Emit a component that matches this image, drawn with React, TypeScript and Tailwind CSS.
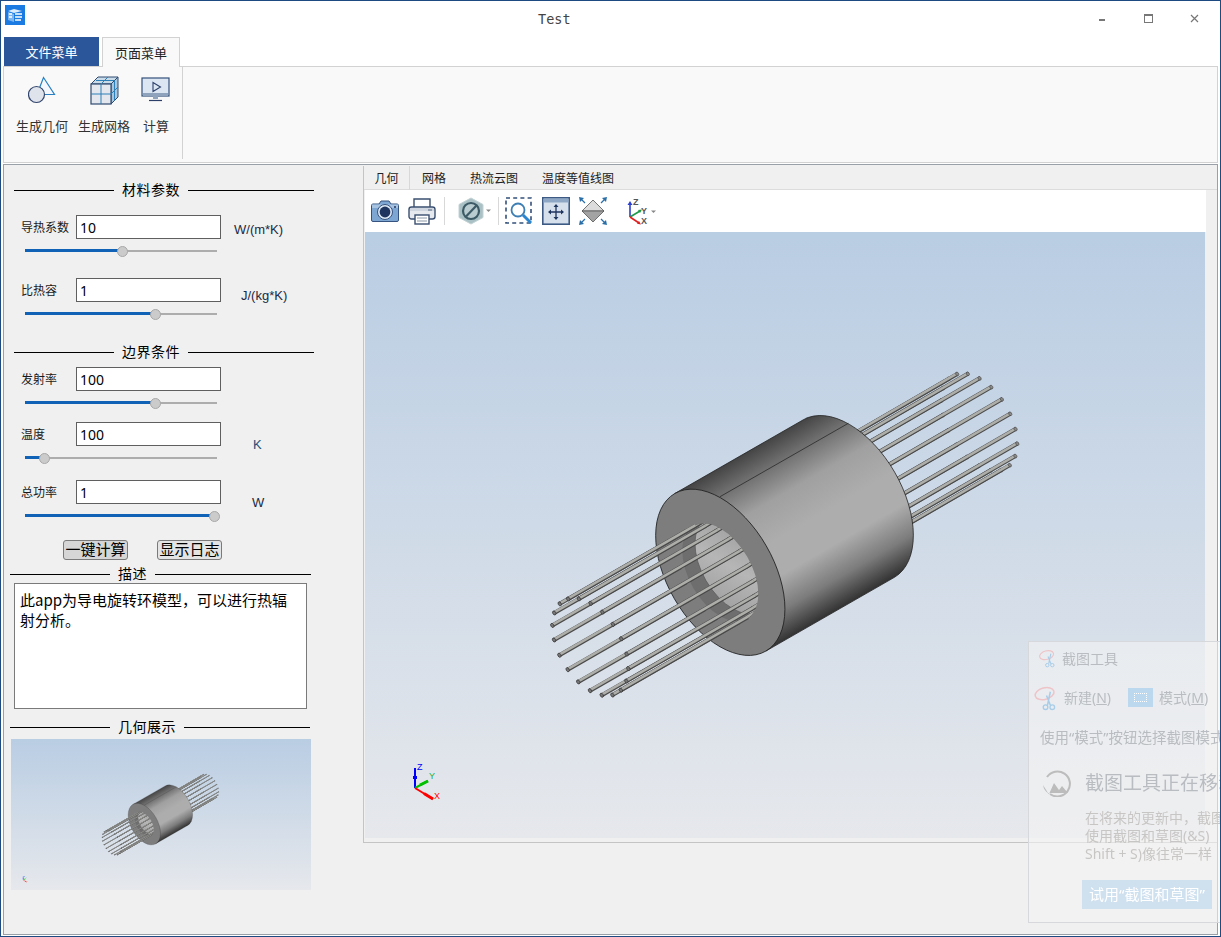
import { FC } from "react";

interface FieldProps {
  label: string;
  value: string;
  unit?: string;
  unitClass?: string;
  handleX: number;
  className?: string;
}

const SLIDER_WIDTH = 192;

// rods of the model, front end on a tilted ellipse
const rods = Array.from({ length: 20 }, (_, i) => {
  const th = ((i * 18 + 9) * Math.PI) / 180;
  const ox = 53.3 * Math.cos(th) * 0.5 + 31.3 * Math.sin(th) * 0.866;
  const oy = 53.3 * Math.cos(th) * 0.866 - 31.3 * Math.sin(th) * 0.5;
  return { x: 590.3 + ox, y: 647 + oy, depth: Math.sin(th) };
}).sort((a, b) => a.depth - b.depth);

const RodLine: FC<{ x1: number; y1: number; x2: number; y2: number }> = ({ x1, y1, x2, y2 }) => (
  <>
    <line x1={x1} y1={y1} x2={x2} y2={y2} stroke="#4a4a4a" strokeWidth="4" />
    <line x1={x1} y1={y1 - 0.5} x2={x2} y2={y2 - 0.5} stroke="#adada9" strokeWidth="2.6" />
  </>
);

const Triad: FC<{ x: number; y: number; scale?: number }> = ({ x, y, scale = 1 }) => (
  <g transform={`translate(${x} ${y}) scale(${scale})`}>
    <line x1="0" y1="0" x2="0" y2="-20" stroke="#0000ff" strokeWidth="2" />
    <line x1="0" y1="-12" x2="0" y2="-9" stroke="#0000ff" strokeWidth="4" />
    <line x1="0" y1="0" x2="13" y2="-7" stroke="#00c000" strokeWidth="2" />
    <line x1="5" y1="-3" x2="13" y2="-7" stroke="#00c000" strokeWidth="3" />
    <line x1="0" y1="0" x2="18" y2="11" stroke="#ff0000" strokeWidth="2" />
    <line x1="9" y1="5.5" x2="18" y2="11" stroke="#ff0000" strokeWidth="3" />
    <text x="2" y="-18" fontSize="9" fill="#0000ff" fontFamily="Liberation Sans">Z</text>
    <text x="14" y="-9" fontSize="9" fill="#20b040" fontFamily="Liberation Sans">Y</text>
    <text x="19" y="11" fontSize="9" fill="#ff0000" fontFamily="Liberation Sans">X</text>
  </g>
);

const Model: FC<{ id: string }> = ({ id }) => (
  <>
    <defs>
      <linearGradient id={`${id}-body`} gradientUnits="userSpaceOnUse" x1="674.8" y1="493.5" x2="765.8" y2="651.1">
        <stop offset="0" stopColor="#444444" />
        <stop offset="0.12" stopColor="#6c6c6c" />
        <stop offset="0.3" stopColor="#a0a0a0" />
        <stop offset="0.5" stopColor="#adadad" />
        <stop offset="0.68" stopColor="#adadad" />
        <stop offset="0.85" stopColor="#7c7c7c" />
        <stop offset="1" stopColor="#333333" />
      </linearGradient>
      <linearGradient id={`${id}-wall`} gradientUnits="userSpaceOnUse" x1="700" y1="530" x2="750" y2="615">
        <stop offset="0" stopColor="#9a9a9a" />
        <stop offset="0.5" stopColor="#b6b6b6" />
        <stop offset="1" stopColor="#9c9c9c" />
      </linearGradient>
      <clipPath id={`${id}-hole`}>
        <ellipse cx="720.3" cy="572.3" rx="53.5" ry="31.2" transform="rotate(60 720.3 572.3)" />
      </clipPath>
    </defs>

    {rods.map((r, i) => (
      <g key={i}>
        <RodLine x1={r.x + 200} y1={r.y - 115.5} x2={r.x + 389} y2={r.y - 225} />
        <ellipse cx={r.x + 389} cy={r.y - 225} rx="2" ry="1.4" transform={`rotate(60 ${r.x + 389} ${r.y - 225})`} fill="#8a8a8a" stroke="#444" strokeWidth="0.6" />
      </g>
    ))}

    <path
      d="M674.8 493.5 L803.8 419.5 A91 53 60 0 1 894.8 577.1 L765.8 651.1 Z"
      fill={`url(#${id}-body)`}
      stroke="#222"
      strokeWidth="0.8"
    />
    <line x1="720" y1="496.7" x2="848.3" y2="423.3" stroke="#2a2a2a" strokeWidth="0.8" />
    <ellipse cx="720.3" cy="572.3" rx="91" ry="53" transform="rotate(60 720.3 572.3)" fill="#7d7d7d" stroke="#222" strokeWidth="0.8" />
    <ellipse cx="720.3" cy="572.3" rx="53.5" ry="31.2" transform="rotate(60 720.3 572.3)" fill="#6e6e6e" />
    <g clipPath={`url(#${id}-hole)`}>
      <ellipse cx="733" cy="565" rx="53.5" ry="31.2" transform="rotate(60 733 565)" fill={`url(#${id}-wall)`} stroke="#555" strokeWidth="0.6" />
      {rods.map((r, i) => (
        <RodLine key={i} x1={r.x + 125} y1={r.y - 72} x2={r.x + 200} y2={r.y - 115.5} />
      ))}
    </g>
    {rods.map((r, i) => (
      <g key={i}>
        <RodLine x1={r.x} y1={r.y} x2={r.x + 127} y2={r.y - 73} />
        <ellipse cx={r.x} cy={r.y} rx="2.2" ry="1.5" transform={`rotate(60 ${r.x} ${r.y})`} fill="#777" stroke="#333" strokeWidth="0.7" />
      </g>
    ))}
  </>
);

const SectionTitle: FC<{ title: string; left: string; right: string; className?: string }> = ({
  title,
  left,
  right,
  className,
}) => (
  <div className={`flex h-[20px] items-center ${className}`}>
    <div className={`h-px bg-black ${left}`} />
    <span className="mx-2 -translate-y-px text-[14px] leading-5 tracking-[0.5px] text-black whitespace-nowrap">{title}</span>
    <div className={`h-px bg-black ${right}`} />
  </div>
);

const Slider: FC<{ handleX: number }> = ({ handleX }) => {
  const pos = handleX - 25;
  return (
    <div className="relative mt-[5px] ml-[21px] flex h-[14px] w-[192px] items-center">
      <div className="h-[2px] w-full bg-[#adadad]" />
      <div className="absolute left-0 top-[5px] h-[3px] bg-[#0f62b5]" style={{ width: (pos / SLIDER_WIDTH) * 100 + "%" }} />
      <div
        className="absolute top-[1.5px] h-[11px] w-[11px] rounded-full border border-[#a8a8a8] bg-[#cbcbcb]"
        style={{ left: pos - 5.5 }}
      />
    </div>
  );
};

const Field: FC<FieldProps> = ({ label, value, unit, unitClass, handleX, className }) => (
  <div className={className}>
    <div className="flex h-[24px] items-start">
      <span className="ml-[17px] h-[24px] w-[55px] text-[12px] leading-[24px] text-[#1a1a1a] whitespace-nowrap">{label}</span>
      <div className="h-[24px] w-[145px] border border-[#5f5f5f] bg-white pl-[3px] font-['Noto_Sans',sans-serif] text-[14px] leading-[23px] text-black">
        {value}
      </div>
      {unit && (
        <span className={`font-['Liberation_Sans',sans-serif] text-[13px] leading-4 text-[#1a2a44] whitespace-nowrap ${unitClass}`}>
          {unit}
        </span>
      )}
    </div>
    <Slider handleX={handleX} />
  </div>
);

const RibbonButton: FC<{ label: string; width: string; children: React.ReactNode }> = ({ label, width, children }) => (
  <div className={`flex flex-col items-center ${width}`}>
    <div className="flex h-[30px] items-center justify-center">{children}</div>
    <span className="mt-[12px] text-[13px] leading-[18px] text-[#333] whitespace-nowrap">{label}</span>
  </div>
);

const AppIcon = () => (
  <svg width="20" height="20" viewBox="0 0 20 20">
    <rect width="20" height="20" fill="#1b7be3" />
    <path d="M3 6 L9 4 L17 6 L9 8 Z" fill="#dcecfb" />
    <path d="M3 7v8l6 2V9Z" fill="#7fb5ef" />
    <path d="M10 9h7M10 12h7M10 15h6M4 9h3M4 12h3" stroke="#fff" strokeWidth="1.6" />
  </svg>
);

const ShapesIcon = () => (
  <svg width="28" height="28" viewBox="0 0 28 28">
    <path d="M15.5 1.5 L26.5 18.5 H9 Z" fill="#f4f8fc" stroke="#2a80c0" strokeWidth="1.2" />
    <circle cx="8.5" cy="18.5" r="8" fill="#dfe3ec" stroke="#33466e" strokeWidth="1.2" />
  </svg>
);

const MeshIcon = () => (
  <svg width="30" height="30" viewBox="0 0 30 30">
    <path d="M2 9 L9 2 H29 L22 9 Z" fill="#c9dbe9" stroke="#2f4a70" strokeWidth="1" />
    <path d="M22 9 L29 2 V22 L22 29 Z" fill="#a8c6de" stroke="#2f4a70" strokeWidth="1" />
    <rect x="2" y="9" width="20" height="20" fill="#e4e8ee" stroke="#2f4a70" strokeWidth="1.2" />
    <path d="M2 19 H22 M12 9 V29 M12 9 L19 2 M7 5.5 H25 M22 19 L29 12 M25.5 5.5 V25.5" stroke="#2d7fb8" strokeWidth="1" fill="none" />
  </svg>
);

const MonitorIcon = () => (
  <svg width="30" height="26" viewBox="0 0 30 26">
    <rect x="1" y="1" width="27" height="18" fill="#dbe6f2" stroke="#33507a" strokeWidth="1.2" />
    <rect x="2" y="16" width="25" height="3" fill="#8fa3bd" />
    <path d="M12 5.5 L19.5 10 L12 14.5 Z" fill="none" stroke="#2c3f68" strokeWidth="1.1" />
    <path d="M12 19h5v3h-5Z" fill="#8fa3bd" />
    <path d="M8 23.5h13" stroke="#2c3f68" strokeWidth="1.2" />
  </svg>
);

const CameraIcon = () => (
  <svg width="28" height="24" viewBox="0 0 28 24">
    <path d="M8 5 L10 2 H18 L20 5 H26 A1.5 1.5 0 0 1 27.5 6.5 V21 A1.5 1.5 0 0 1 26 22.5 H2 A1.5 1.5 0 0 1 .5 21 V6.5 A1.5 1.5 0 0 1 2 5 Z" fill="#7ea6d2" stroke="#36527e" />
    <path d="M1 5.5 H27 V9 H1 Z" fill="#a7c3e2" />
    <circle cx="14" cy="13" r="7.5" fill="#dce7f3" stroke="#36527e" />
    <circle cx="14" cy="13" r="5.4" fill="#1f3560" />
    <circle cx="24" cy="8" r="1" fill="#1f3560" />
  </svg>
);

const PrinterIcon = () => (
  <svg width="28" height="28" viewBox="0 0 28 28">
    <path d="M6 10 V2 H22 V10" fill="#fff" stroke="#3a4f70" strokeWidth="1.4" />
    <rect x="1" y="10" width="26" height="12" rx="2.5" fill="#e6e9ee" stroke="#3a4f70" strokeWidth="1.4" />
    <rect x="2" y="11" width="24" height="3" fill="#cfd6e0" />
    <rect x="7" y="18" width="14" height="9" fill="#fff" stroke="#3a4f70" strokeWidth="1.4" />
    <path d="M9 21h10M9 24h10" stroke="#8b97a8" strokeWidth="1.2" />
    <path d="M20 13h4" stroke="#6a7a90" strokeWidth="1.2" />
  </svg>
);

const SectionIcon = () => (
  <svg width="34" height="28" viewBox="0 0 34 28">
    <path d="M13 1 L25 7.5 V20.5 L13 27 L1 20.5 V7.5 Z" fill="#a9c0c4" stroke="#c2d2d4" />
    <circle cx="13" cy="14" r="8" fill="#b9ccd0" stroke="#3c5b66" strokeWidth="2.2" />
    <path d="M8 19.5 L18.5 8.5" stroke="#3c5b66" strokeWidth="2.2" />
    <path d="M28 12.5 h5 l-2.5 2.5 Z" fill="#888" />
  </svg>
);

const ZoomBoxIcon = () => (
  <svg width="28" height="28" viewBox="0 0 28 28">
    <rect x="1" y="1" width="25" height="25" fill="none" stroke="#33507a" strokeWidth="1.6" strokeDasharray="4 3.2" />
    <circle cx="13" cy="13" r="6.5" fill="#fff" stroke="#3d7fb5" strokeWidth="1.8" />
    <path d="M18 18 L26 26" stroke="#2a86cf" strokeWidth="3" />
  </svg>
);

const FitIcon = () => (
  <svg width="28" height="28" viewBox="0 0 28 28">
    <rect x=".8" y=".8" width="26.4" height="26.4" fill="#d5e0ec" stroke="#3d5a85" strokeWidth="1.6" />
    <rect x="1.5" y="1.5" width="25" height="4" fill="#8ea7c4" />
    <path d="M14 8v14M7 15h14" stroke="#1f3560" strokeWidth="1.3" />
    <path d="M14 7l-2.5 3h5ZM14 23l-2.5-3h5ZM6 15l3-2.5v5ZM22 15l-3-2.5v5Z" fill="#1f3560" />
  </svg>
);

const IsoIcon = () => (
  <svg width="28" height="28" viewBox="0 0 28 28">
    <path d="M14 3 L25 14 H3 Z" fill="#dcdcdc" stroke="#555" strokeWidth=".8" />
    <path d="M3 14 H25 L14 25 Z" fill="#a3a3a3" stroke="#555" strokeWidth=".8" />
    <path d="M0 0l5 1-4 4ZM28 0l-5 1 4 4ZM0 28l5-1-4-4ZM28 28l-5-1 4-4Z" fill="#2a6fa8" />
    <path d="M2 2l4 4M26 2l-4 4M2 26l4-4M26 26l-4-4" stroke="#2a6fa8" strokeWidth="1.2" />
  </svg>
);

const ToolTriad = () => (
  <svg width="34" height="28" viewBox="0 0 34 28">
    <path d="M5 20V7" stroke="#2b3fd0" strokeWidth="1.6" />
    <path d="M5 4l-2.5 4h5Z" fill="#2b3fd0" />
    <path d="M5 20L15 14" stroke="#1f9a4a" strokeWidth="1.6" />
    <path d="M17 12.5l-4 .4 2 3Z" fill="#1f9a4a" />
    <path d="M5 20L14 26" stroke="#e02020" strokeWidth="1.6" />
    <path d="M16 27.5l-2-3.6-2 2.8Z" fill="#e02020" />
    <text x="8" y="8" fontSize="9" fontWeight="700" fill="#555" fontFamily="Liberation Sans">Z</text>
    <text x="16" y="17" fontSize="9" fontWeight="700" fill="#555" fontFamily="Liberation Sans">Y</text>
    <text x="16" y="27" fontSize="9" fontWeight="700" fill="#555" fontFamily="Liberation Sans">X</text>
    <path d="M26 13.5 h5 l-2.5 2.5 Z" fill="#888" />
  </svg>
);

const ScissorsIcon: FC<{ size: number }> = ({ size }) => (
  <svg className="shrink-0" width={size} height={size} viewBox="0 0 28 28" fill="none">
    <ellipse cx="12" cy="10" rx="10" ry="6" transform="rotate(-15 12 10)" stroke="#eec4c8" strokeWidth="1.6" />
    <path d="M14 12 L18 22 M18 8 L15 22" stroke="#a9cde8" strokeWidth="1.6" />
    <circle cx="13" cy="24" r="2.4" stroke="#a9cde8" strokeWidth="1.4" />
    <circle cx="20" cy="24" r="2.4" stroke="#a9cde8" strokeWidth="1.4" />
  </svg>
);

const SnipOverlay = () => (
  <div className="absolute left-[1027px] top-[640px] h-[282px] w-[192px] overflow-hidden border border-r-0 border-[#d6d8dc] bg-[#f3f3f3]/60 font-['Noto_Sans','Noto_Sans_CJK_SC',sans-serif] text-[#b9bcc0] blur-[0.4px]">
    <div className="flex h-[32px] items-center pl-[9px]">
      <ScissorsIcon size={20} />
      <span className="ml-[4px] text-[14px] whitespace-nowrap">截图工具</span>
    </div>
    <div className="mt-[8px] flex h-[30px] items-center pl-[4px]">
      <ScissorsIcon size={27} />
      <span className="ml-[4px] text-[14px] whitespace-nowrap">
        新建(<span className="underline">N</span>)
      </span>
      <div className="ml-[17px] flex h-[19px] w-[25px] shrink-0 items-center justify-center bg-[#bcd8ee]">
        <div className="h-[9px] w-[13px] border border-dotted border-white" />
      </div>
      <span className="ml-[6px] text-[14px] whitespace-nowrap">
        模式(<span className="underline">M</span>)
      </span>
    </div>
    <div className="mt-[15px] pl-[11px] text-[14.5px] leading-[20px] whitespace-nowrap">使用“模式”按钮选择截图模式</div>
    <div className="mt-[22px] flex items-center pl-[12px]">
      <svg className="shrink-0" width="30" height="28" viewBox="0 0 30 28" fill="none">
        <path d="M6 8 A12.5 12.5 0 1 1 9 25" stroke="#bcbcbc" strokeWidth="2" />
        <path d="M2 16 A13 13 0 0 0 8 25 L13 14 L18 21 L21 17 L27 24 H7 Z" fill="#bcbcbc" />
      </svg>
      <span className="ml-[14px] text-[19px] whitespace-nowrap">截图工具正在移动</span>
    </div>
    <div className="mt-[11px] pl-[56px] text-[14px] leading-[18px] whitespace-nowrap text-[#c8c6c4]">
      <div>在将来的更新中，截图工具</div>
      <div>使用截图和草图(&amp;S)</div>
      <div>Shift + S)像往常一样</div>
    </div>
    <div className="ml-[53px] mt-[17px] flex h-[29px] w-[130px] items-center justify-center bg-[#cfe0ef] text-[15px] text-white whitespace-nowrap">
      试用“截图和草图”
    </div>
  </div>
);

const App: FC = () => {
  return (
    <div className="relative h-[937px] w-[1221px] overflow-hidden border border-[#1d4a80] bg-white font-['Noto_Sans_CJK_SC','Liberation_Sans',sans-serif]">
      {/* title bar */}
      <div className="flex h-[36px] items-start">
        <div className="ml-[4px] mt-[4px]">
          <AppIcon />
        </div>
        <span className="ml-[513px] mt-[10px] font-['DejaVu_Sans_Mono',monospace] text-[13.5px] leading-4 text-[#444]">Test</span>
        <div className="ml-auto mr-[3px] flex text-[#777]">
          <div className="flex h-[34px] w-[46px] items-center justify-center">
            <div className="mt-[3px] h-[2px] w-[6px] bg-[#777]" />
          </div>
          <div className="flex h-[34px] w-[46px] items-center justify-center">
            <div className="h-[9px] w-[9px] border border-t-2 border-[#777]" />
          </div>
          <div className="flex h-[34px] w-[46px] items-center justify-center">
            <svg width="9" height="9" viewBox="0 0 9 9">
              <path d="M1 1l7 7M8 1L1 8" stroke="#777" strokeWidth="1.2" />
            </svg>
          </div>
        </div>
      </div>

      {/* ribbon tabs */}
      <div className="flex h-[30px] items-start pl-[3px]">
        <div className="flex h-[29px] w-[95px] items-center justify-center bg-[#2b579a] text-[13px] text-white">文件菜单</div>
        <div className="relative z-10 ml-[3px] flex h-[30px] w-[78px] items-center justify-center border border-b-0 border-[#d2d2d2] bg-[#f9f9f9] text-[13px] text-[#222]">
          页面菜单
        </div>
      </div>

      {/* ribbon */}
      <div className="mx-[2px] -mt-px flex h-[97px] border border-[#d2d2d2] bg-[#f9f9f9] pl-[10px] pr-0">
        <div className="flex h-[92px] w-[169px] border-r border-[#d2d2d2] pt-[8px]">
          <RibbonButton label="生成几何" width="w-[56px]">
            <ShapesIcon />
          </RibbonButton>
          <RibbonButton label="生成网格" width="w-[68px]">
            <MeshIcon />
          </RibbonButton>
          <RibbonButton label="计算" width="w-[36px]">
            <MonitorIcon />
          </RibbonButton>
        </div>
      </div>

      {/* main area */}
      <div className="mx-[2px] mt-px flex h-[771px] border border-[#9aa0a8] bg-[#f0f0f0]">
        <div className="w-[359px] shrink-0">
          <SectionTitle title="材料参数" left="w-[100px]" right="w-[126px]" className="ml-[10px] mt-[15px]" />
          <Field label="导热系数" value="10" unit="W/(m*K)" unitClass="ml-[13px] mt-[7px]" handleX={122} className="mt-[15px]" />
          <Field label="比热容" value="1" unit="J/(kg*K)" unitClass="ml-[20px] mt-[10px]" handleX={155} className="mt-[20px]" />
          <SectionTitle title="边界条件" left="w-[100px]" right="w-[126px]" className="ml-[10px] mt-[21px]" />
          <Field label="发射率" value="100" handleX={155} className="mt-[5px]" />
          <Field label="温度" value="100" unit="K" unitClass="ml-[32px] mt-[15px] text-[#1f4e79]" handleX={44} className="mt-[12px]" />
          <Field label="总功率" value="1" unit="W" unitClass="ml-[31px] mt-[15px]" handleX={214} className="mt-[15px]" />

          <div className="mt-[17px] flex pl-[59px]">
            <button className="h-[20px] w-[65px] rounded-[3px] border border-[#7a7a7a] bg-[#d6d6d6] pb-[3px] text-[15px] leading-[15px] text-black">一键计算</button>
            <button className="ml-[29px] h-[20px] w-[65px] rounded-[3px] border border-[#7a7a7a] bg-[#e4e4e4] pb-[3px] text-[15px] leading-[15px] text-black">显示日志</button>
          </div>

          <SectionTitle title="描述" left="w-[100px]" right="w-[156px]" className="ml-[6px] mt-[5px] !h-[18px]" />
          <div className="ml-[10px] h-[126px] w-[293px] border border-[#7a7a7a] bg-white pl-[5px] pr-[12px] pt-[6px] text-[15px] leading-[20px] text-black">
            此app为导电旋转环模型，可以进行热辐射分析。
          </div>

          <SectionTitle title="几何展示" left="w-[100px]" right="w-[126px]" className="ml-[6px] mt-[8px]" />
          <svg className="ml-[7px] mt-[2px] block bg-gradient-to-b from-[#b9cde3] to-[#e6e8ec]" width="300" height="151" viewBox="187 232 1200 604">
            <Model id="thumb" />
            <Triad x={236} y={796} scale={0.7} />
          </svg>
        </div>

        {/* right tabs panel */}
        <div className="mt-px flex h-[677px] flex-1 flex-col border-b border-l border-[#c4c4c4]">
          <div className="flex h-[24px] items-center border-b border-[#dcdcdc] text-[12px] text-[#222]">
            <div className="flex h-[24px] w-[46px] items-center justify-center border-r border-[#d8d8d8]">几何</div>
            <span className="ml-[12px] whitespace-nowrap">网格</span>
            <span className="ml-[24px] whitespace-nowrap">热流云图</span>
            <span className="ml-[24px] whitespace-nowrap">温度等值线图</span>
          </div>
          <div className="ml-px mr-[11px] flex h-[42px] items-center bg-white pl-[6px]">
            <CameraIcon />
            <div className="ml-[9px]">
              <PrinterIcon />
            </div>
            <div className="ml-[8px] h-[28px] w-px bg-[#d8d8d8]" />
            <div className="ml-[13px]">
              <SectionIcon />
            </div>
            <div className="ml-[6px] h-[28px] w-px bg-[#d8d8d8]" />
            <div className="ml-[6px]">
              <ZoomBoxIcon />
            </div>
            <div className="ml-[9px]">
              <FitIcon />
            </div>
            <div className="ml-[9px]">
              <IsoIcon />
            </div>
            <div className="ml-[18px]">
              <ToolTriad />
            </div>
          </div>
          <svg className="ml-px block bg-gradient-to-b from-[#b9cde3] to-[#e6e8ec]" width="840" height="606" viewBox="365 232 840 606">
            <Model id="main" />
            <Triad x={415} y={788} />
          </svg>
        </div>
      </div>

      <SnipOverlay />
    </div>
  );
};

export default App;
